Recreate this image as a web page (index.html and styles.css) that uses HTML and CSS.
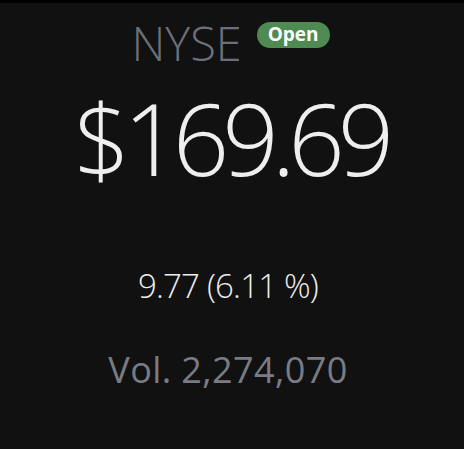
FILE: index.html
```html
<!DOCTYPE html>
<html lang="en">
	<head>
		<meta charset="utf-8">
		<title>Quote</title>
		<link rel="stylesheet" href="styles.css">
	</head>
	<body>
		<div id="quote">
			<div id="exchange-row">
				<span id="exchange">NYSE</span>
				<span id="status" class="open">Open</span>
			</div>
			<p id="price">$169.69</p>
			<p id="change">9.77 (6.11 %)</p>
			<p id="volume">Vol. 2,274,070</p>
		</div>
	</body>
</html>
```

FILE: styles.css
```css
* {
	box-sizing:border-box}
body {
	background-color:#111111;
	border-top:3px solid #000000;
	font-family:"Open Sans", sans-serif;
	height:449px;
	margin:0}
p {
	margin:0;
	text-align:center}
#quote {
	align-items:center;
	display:flex;
	flex-direction:column;
	padding-right:8px}
#exchange-row {
	align-items:flex-start;
	display:flex;
	gap:15px;
	margin-left:5px;
	margin-top:10px}
#exchange {
	color:#6d7078;
	font-size:47px;
	font-weight:300;
	line-height:60px}
#status {
	border-radius:13px;
	color:#ffffff;
	font-size:19px;
	font-weight:700;
	height:26px;
	line-height:25px;
	margin-top:9px;
	padding:0 11px}
.open {
	background-color:#4f8a53}
#price {
	color:#eeeeee;
	font-size:99px;
	font-weight:300;
	letter-spacing:-7px;
	line-height:120px;
	margin-top:5px;
	padding-left:5px}
#change {
	color:#eeeeee;
	font-size:33px;
	font-weight:300;
	letter-spacing:-0.8px;
	line-height:44px;
	margin-top:66px}
#volume {
	color:#797c84;
	font-size:36px;
	font-weight:400;
	letter-spacing:0.4px;
	line-height:44px;
	margin-top:40px}
```
